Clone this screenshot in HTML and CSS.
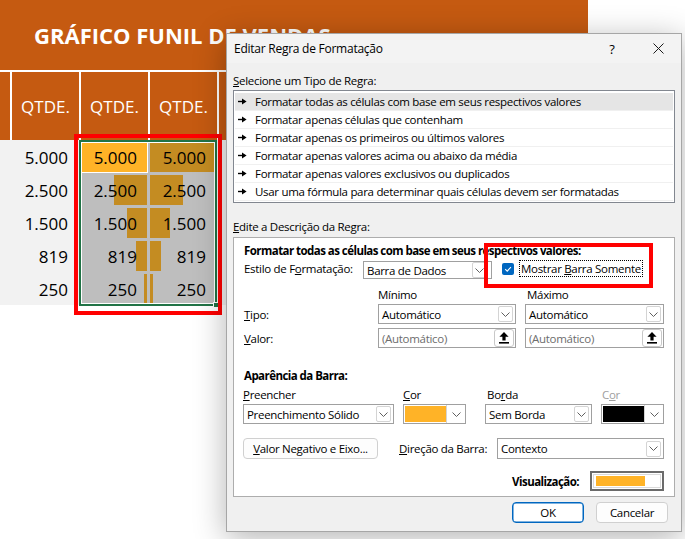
FILE: index.html
```html
<!DOCTYPE html>
<html lang="pt-BR">
<head>
<meta charset="utf-8">
<title>Editar Regra de Formatação</title>
<link rel="stylesheet" href="styles.css">
</head>
<body>
<div class="sheet">
  <div class="title">GRÁFICO FUNIL DE VENDAS</div>
  <div class="hdr">
    <div></div><div>QTDE.</div><div>QTDE.</div><div>QTDE.</div><div></div>
  </div>
  <div class="data">
    <div></div><div class="num">5.000</div><div class="num active">5.000</div><div class="num sel r" style="--w:66px">5.000</div><div></div>
    <div></div><div class="num">2.500</div><div class="num sel l" style="--w:33px">2.500</div><div class="num sel r" style="--w:33px">2.500</div><div></div>
    <div></div><div class="num">1.500</div><div class="num sel l" style="--w:20px">1.500</div><div class="num sel r" style="--w:20px">1.500</div><div></div>
    <div></div><div class="num">819</div><div class="num sel l" style="--w:11px">819</div><div class="num sel r" style="--w:11px">819</div><div></div>
    <div></div><div class="num">250</div><div class="num sel l" style="--w:3px">250</div><div class="num sel r" style="--w:3px">250</div><div></div>
    <div class="selbox"><span class="handle"></span><span class="anno"></span></div>
  </div>
</div>

<div class="dialog">
  <div class="titlebar">
    <span class="dtitle">Editar Regra de Formatação</span>
    <span class="tbtn">?</span>
    <span class="tbtn"><svg width="11" height="11" viewBox="0 0 11 11"><path d="M0.5 0.5L10.5 10.5M10.5 0.5L0.5 10.5" stroke="#1a1a1a" stroke-width="1"/></svg></span>
  </div>
  <div class="dbody">
    <div class="lbl sec1"><u>S</u>elecione um Tipo de Regra:</div>
    <ul class="rules">
      <li class="on"><svg class="arr" width="9" height="7" viewBox="0 0 9 7"><path d="M0 3.5H5" stroke="#000" stroke-width="1.4"/><path d="M4 0.6L8.6 3.5L4 6.4Z" fill="#000"/></svg>Formatar todas as células com base em seus respectivos valores</li>
      <li><svg class="arr" width="9" height="7" viewBox="0 0 9 7"><path d="M0 3.5H5" stroke="#000" stroke-width="1.4"/><path d="M4 0.6L8.6 3.5L4 6.4Z" fill="#000"/></svg>Formatar apenas células que contenham</li>
      <li><svg class="arr" width="9" height="7" viewBox="0 0 9 7"><path d="M0 3.5H5" stroke="#000" stroke-width="1.4"/><path d="M4 0.6L8.6 3.5L4 6.4Z" fill="#000"/></svg>Formatar apenas os primeiros ou últimos valores</li>
      <li><svg class="arr" width="9" height="7" viewBox="0 0 9 7"><path d="M0 3.5H5" stroke="#000" stroke-width="1.4"/><path d="M4 0.6L8.6 3.5L4 6.4Z" fill="#000"/></svg>Formatar apenas valores acima ou abaixo da média</li>
      <li><svg class="arr" width="9" height="7" viewBox="0 0 9 7"><path d="M0 3.5H5" stroke="#000" stroke-width="1.4"/><path d="M4 0.6L8.6 3.5L4 6.4Z" fill="#000"/></svg>Formatar apenas valores exclusivos ou duplicados</li>
      <li><svg class="arr" width="9" height="7" viewBox="0 0 9 7"><path d="M0 3.5H5" stroke="#000" stroke-width="1.4"/><path d="M4 0.6L8.6 3.5L4 6.4Z" fill="#000"/></svg>Usar uma fórmula para determinar quais células devem ser formatadas</li>
    </ul>
    <div class="lbl sec2"><u>E</u>dite a Descrição da Regra:</div>
    <div class="group">
      <div class="gtitle">Formatar todas as células com base em seus respectivos valores:</div>
      <div class="estilo">
        <span class="elabel">Estilo de F<u>o</u>rmatação:</span>
        <div class="combo c-estilo"><span class="ct">Barra de Dados</span><span class="dd"><svg width="9" height="5" viewBox="0 0 9 5"><path d="M0.5 0.5L4.5 4.5L8.5 0.5" fill="none" stroke="#606060" stroke-width="1"/></svg></span></div>
        <span class="chk"><svg width="12" height="12" viewBox="0 0 12 12"><path d="M3.2 6.2L5.2 8.1L8.9 4.2" fill="none" stroke="#fff" stroke-width="1.1"/></svg></span>
        <span class="focus">Mostrar <u>B</u>arra Somente</span>
        <span class="anno2"></span>
      </div>
      <div class="mm">
        <span></span><span class="colh">Mínimo</span><span class="colh mx">Máximo</span>
        <span class="rl"><u>T</u>ipo:</span>
        <div class="combo"><span class="ct">Automático</span><span class="dd"><svg width="9" height="5" viewBox="0 0 9 5"><path d="M0.5 0.5L4.5 4.5L8.5 0.5" fill="none" stroke="#606060" stroke-width="1"/></svg></span></div>
        <div class="combo"><span class="ct">Automático</span><span class="dd"><svg width="9" height="5" viewBox="0 0 9 5"><path d="M0.5 0.5L4.5 4.5L8.5 0.5" fill="none" stroke="#606060" stroke-width="1"/></svg></span></div>
        <span class="rl r2"><u>V</u>alor:</span>
        <div class="combo inp r2"><span class="ct ph">(Automático)</span><span class="up"><svg width="10" height="12" viewBox="0 0 10 12"><path d="M5 0L9.6 4.8H6.6V8.6H3.4V4.8H0.4Z" fill="#000"/><rect x="0" y="10" width="10" height="1.6" fill="#000"/></svg></span></div>
        <div class="combo inp r2"><span class="ct ph">(Automático)</span><span class="up"><svg width="10" height="12" viewBox="0 0 10 12"><path d="M5 0L9.6 4.8H6.6V8.6H3.4V4.8H0.4Z" fill="#000"/><rect x="0" y="10" width="10" height="1.6" fill="#000"/></svg></span></div>
      </div>
      <div class="gsub">Aparência da Barra:</div>
      <div class="app">
        <span class="al"><u>P</u>reencher</span>
        <span class="al"><u>C</u>or</span>
        <span class="al bd">Bo<u>r</u>da</span>
        <span class="al dis">C<u>o</u>r</span>
        <div class="combo c-fill"><span class="ct">Preenchimento Sólido</span><span class="dd"><svg width="9" height="5" viewBox="0 0 9 5"><path d="M0.5 0.5L4.5 4.5L8.5 0.5" fill="none" stroke="#606060" stroke-width="1"/></svg></span></div>
        <div class="combo color"><span class="sw orange"></span><span class="cdd"><svg width="9" height="5" viewBox="0 0 9 5"><path d="M0.5 0.5L4.5 4.5L8.5 0.5" fill="none" stroke="#606060" stroke-width="1"/></svg></span></div>
        <div class="combo c-borda"><span class="ct">Sem Borda</span><span class="dd"><svg width="9" height="5" viewBox="0 0 9 5"><path d="M0.5 0.5L4.5 4.5L8.5 0.5" fill="none" stroke="#606060" stroke-width="1"/></svg></span></div>
        <div class="combo color"><span class="sw black"></span><span class="cdd"><svg width="9" height="5" viewBox="0 0 9 5"><path d="M0.5 0.5L4.5 4.5L8.5 0.5" fill="none" stroke="#606060" stroke-width="1"/></svg></span></div>
      </div>
      <div class="brow">
        <span class="btn neg"><u>V</u>alor Negativo e Eixo...</span>
        <span class="dl"><u>D</u>ireção da Barra:</span>
        <div class="combo c-dir"><span class="ct">Contexto</span><span class="dd"><svg width="9" height="5" viewBox="0 0 9 5"><path d="M0.5 0.5L4.5 4.5L8.5 0.5" fill="none" stroke="#606060" stroke-width="1"/></svg></span></div>
      </div>
      <div class="prow">
        <span class="pl">Visualização:</span>
        <span class="preview"><span class="pin"><span class="pbar"></span></span></span>
      </div>
    </div>
    <div class="actions">
      <span class="btn ok">OK</span>
      <span class="btn">Cancelar</span>
    </div>
  </div>
</div>
</body>
</html>
```

FILE: styles.css
```css
* { box-sizing: border-box; }
html, body { margin: 0; padding: 0; }
body {
  width: 685px;
  height: 539px;
  overflow: hidden;
  background: #fff;
  position: relative;
  font-family: "Open Sans", "Noto Sans", sans-serif;
}

/* spreadsheet */
.sheet { width: 588px; }
.title {
  height: 70px;
  background: #c55a11;
  color: #fff;
  font-weight: 700;
  font-size: 22px;
  line-height: 70px;
  padding-left: 34px;
  white-space: nowrap;
  overflow: hidden;
}
.hdr {
  margin-top: 2px;
  display: grid;
  grid-template-columns: 10px 69px 69px 69px 1fr;
  height: 68px;
}
.hdr > div {
  background: #c55a11;
  color: #fff;
  font-size: 17px;
  display: flex;
  align-items: center;
  justify-content: center;
}
.hdr > div + div { border-left: 2px solid #fff; }
.data {
  position: relative;
  display: grid;
  grid-template-columns: 10px 69px 69px 69px 1fr;
  grid-template-rows: repeat(5, 33px);
  background: #f2f2f2;
}
.num {
  font-size: 17px;
  text-align: right;
  padding-right: 11px;
  line-height: 33px;
  padding-top: 1px;
  color: #000;
}
.sel { background: #bebebe; }
.sel.l {
  background: linear-gradient(#c48c22, #c48c22) right 1px top 2px / var(--w) 30px no-repeat, #bebebe;
}
.sel.r {
  background: linear-gradient(#c48c22, #c48c22) left 2px top 2px / var(--w) 30px no-repeat, #bebebe;
}
.active {
  background: linear-gradient(#ffb327, #ffb327) left 2px top 2px / 66px 30px no-repeat, #fff;
}
.selbox {
  position: absolute;
  left: 79px;
  top: 0;
  width: 138px;
  height: 166px;
  border: 2px solid #217346;
  box-shadow: inset 0 0 0 1px #fff;
}
.handle {
  position: absolute;
  right: -4px;
  bottom: -4px;
  width: 6px;
  height: 6px;
  background: #217346;
  border: 1px solid #fff;
}
.anno {
  position: absolute;
  left: -7px;
  right: -7px;
  top: -8px;
  bottom: -11px;
  border: 4px solid #ff0000;
}

/* dialog */
.dialog {
  position: absolute;
  left: 226px;
  top: 33px;
  width: 456px;
  height: 499px;
  background: #f0f0f0;
  border: 1px solid #a6a6a6;
  box-shadow: 0 6px 30px rgba(0, 0, 0, 0.30);
  font-size: 11.5px;
  letter-spacing: -0.3px;
  color: #000;
}
.titlebar {
  height: 29px;
  display: flex;
  align-items: center;
  background: #f3f3f3;
}
.dtitle { padding-left: 7px; flex: 1; font-size: 12px; letter-spacing: -0.25px; }
.tbtn {
  width: 46px;
  height: 29px;
  display: flex;
  align-items: center;
  justify-content: center;
  font-size: 13px;
}
.dbody { padding: 0 6px; }
.lbl { height: 16px; line-height: 16px; }
.sec1 { margin-top: 10px; }
.rules {
  list-style: none;
  margin: 1px 0 0;
  padding: 2px 1px 1px;
  height: 113px;
  background: #fff;
  border: 1px solid #828790;
}
.rules li {
  height: 18px;
  line-height: 17px;
  padding-left: 3px;
  border-bottom: 1px solid #f0f0f0;
  display: flex;
  align-items: center;
  white-space: nowrap;
}
.rules li.on { background: #e5e5e5; }
.arr { margin-right: 8px; flex: none; }
.sec2 { margin-top: 16px; }
.group {
  margin-top: 2px;
  height: 260px;
  background: #fff;
  border: 1px solid #adadad;
  padding: 5px 10px 0 10px;
}
.gtitle {
  font-weight: 700;
  letter-spacing: -0.55px;
  height: 16px;
  line-height: 16px;
  white-space: nowrap;
}
.estilo {
  margin-top: 2px;
  height: 18px;
  display: flex;
  align-items: center;
  position: relative;
}
.elabel { width: 119px; margin-top: -4px; white-space: nowrap; }
.combo {
  height: 20px;
  border: 1px solid #a0a0a0;
  background: #fff;
  display: flex;
  align-items: center;
  justify-content: space-between;
  padding: 0 2px 0 3px;
}
.ct { white-space: nowrap; }
.ph { color: #6d6d6d; }
.dd {
  width: 15px;
  height: 16px;
  border: 1px solid #d4d4d4;
  border-radius: 2px;
  display: flex;
  align-items: center;
  justify-content: center;
}
.c-estilo { width: 129px; height: 18px; }
.c-estilo .dd { height: 16px; margin-right: 2px; }
.chk {
  width: 12px;
  height: 12px;
  margin-left: 10px;
  margin-top: -2px;
  background: #0067c0;
  border-radius: 2px;
  display: flex;
}
.focus {
  margin-left: 5px;
  margin-top: -3px;
  border: 1px dotted #000;
  padding: 0 1px;
  line-height: 15px;
  white-space: nowrap;
}
.anno2 {
  position: absolute;
  left: 240px;
  top: -18px;
  width: 169px;
  height: 45px;
  border: 4px solid #ff0000;
}
.mm {
  margin-top: 8px;
  display: grid;
  grid-template-columns: 125px 138px 139px;
  grid-template-rows: 17px 20px 24px;
  column-gap: 9px;
}
.mm > .rl { align-self: center; }
.mm > .r2 { align-self: end; }
.mm > .rl.r2 { margin-bottom: 2px; }
.colh { line-height: 16px; }
.mx { padding-left: 2px; }
.inp .up {
  width: 20px;
  height: 18px;
  border: 1px solid #c8c8c8;
  border-radius: 3px;
  display: flex;
  align-items: center;
  justify-content: center;
  margin-right: -1px;
}
.gsub {
  margin-top: 20px;
  font-weight: 700;
  letter-spacing: -0.55px;
  height: 16px;
  line-height: 16px;
}
.app {
  margin-top: 3px;
  margin-left: -1px;
  display: grid;
  grid-template-columns: 160px 82px 116px 63px;
  grid-template-rows: 16px 20px;
  row-gap: 1px;
}
.al { line-height: 16px; }
.dis { color: #a0a0a0; padding-left: 1px; }
.bd { padding-left: 2px; }
.c-fill { width: 151px; }
.c-borda { width: 107px; }
.color {
  width: 63px;
  padding: 0 0 0 1px;
}
.sw { width: 41px; height: 16px; }
.sw.orange { background: #ffb327; }
.sw.black { background: #000; }
.cdd {
  flex: 1;
  height: 18px;
  border-left: 1px solid #d4d4d4;
  display: flex;
  align-items: center;
  justify-content: center;
}
.brow {
  margin-top: 14px;
  margin-left: -1px;
  height: 21px;
  display: flex;
  align-items: center;
}
.btn {
  height: 21px;
  border: 1px solid #d0d0d0;
  border-radius: 4px;
  background: #fdfdfd;
  display: flex;
  align-items: center;
  justify-content: center;
  white-space: nowrap;
}
.neg { width: 135px; }
.dl { margin-left: 21px; width: 98px; white-space: nowrap; }
.c-dir { width: 167px; height: 21px; }
.prow {
  margin-top: 12px;
  height: 20px;
  display: flex;
  justify-content: flex-end;
  align-items: center;
}
.pl { font-weight: 700; letter-spacing: -0.55px; margin-right: 11px; }
.preview {
  width: 74px;
  height: 20px;
  border: 2px solid #6b6b6b;
  padding: 1px;
  display: flex;
}
.pin {
  flex: 1;
  border: 1px solid #dadada;
  padding: 1px 2px;
  display: flex;
}
.pbar { width: 49px; background: #ffb327; }
.actions {
  margin-top: 5px;
  padding-right: 7px;
  display: flex;
  justify-content: flex-end;
  gap: 12px;
}
.actions .btn { width: 72px; }
.actions .ok { border: 1px solid #0067c0; box-shadow: inset 0 0 0 0.5px #0067c0; background: #fff; }
```
